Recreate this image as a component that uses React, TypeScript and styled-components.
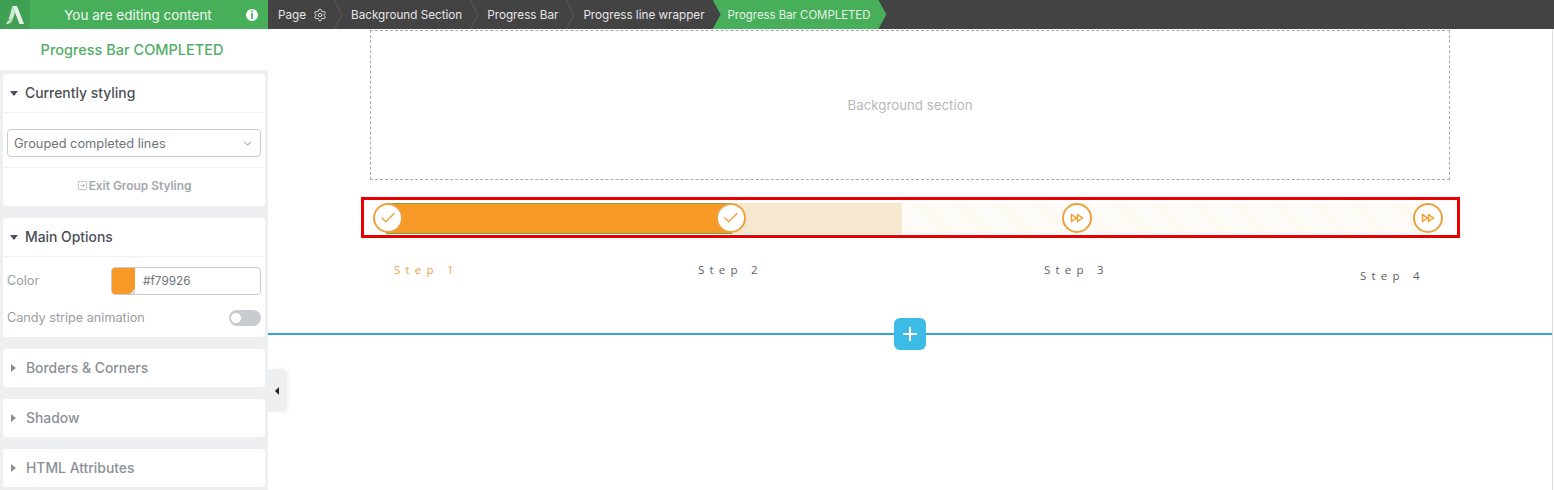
import React from 'react';
import styled, { createGlobalStyle } from 'styled-components';
import { Check, ChevronDown, Settings, SquareArrowRight } from 'lucide-react';

const GlobalStyle = createGlobalStyle`
  html, body {
    margin: 0;
    height: 490px;
    overflow: hidden;
    background: #fff;
    font-family: 'Inter', 'Roboto', sans-serif;
  }
  * { box-sizing: border-box; }
`;

const crumbs = ['Background Section', 'Progress Bar', 'Progress line wrapper'];

function Logo() {
  return (
    <svg width="22" height="22" viewBox="0 0 22 22">
      <path d="M8.500 2h4.500l7 18h-4.500z" fill="#e6f3e7" />
      <path d="M8.500 2l2.500 6.500-2 6-4.500 1z" fill="#cfe8d1" />
      <path d="M2 20.500c.5-3.500 3.500-5.500 7-6-.5 3.500-3 5.500-7 6z" fill="#bfe0c2" />
    </svg>
  );
}

function Forward() {
  return (
    <svg width="14" height="10" viewBox="0 0 14 10" fill="none" stroke="#f79926" strokeWidth="1.4">
      <path d="M1.500 1.500v7L6.500 5zM7.500 1.500v7L12.500 5z" />
    </svg>
  );
}

function App() {
  return (
    <Page>
      <GlobalStyle />
      <TopBar>
        <EditBar>
          <LogoBox>
            <Logo />
          </LogoBox>
          <EditText>You are editing content</EditText>
          <InfoDot>i</InfoDot>
        </EditBar>
        <Crumbs>
          <PageCrumb>
            Page
            <Settings size={14} strokeWidth={1.6} />
          </PageCrumb>
          {crumbs.map((c) => (
            <Crumb key={c}>{c}</Crumb>
          ))}
          <ActiveCrumb>Progress Bar COMPLETED</ActiveCrumb>
        </Crumbs>
      </TopBar>

      <Body>
        <Sidebar>
          <SideTitle>Progress Bar COMPLETED</SideTitle>
          <Panels>
            <Panel>
              <PanelHead>
                <Arrow $open />
                Currently styling
              </PanelHead>
              <SelectRow>
                <FakeSelect>
                  Grouped completed lines
                  <ChevronDown size={13} strokeWidth={1.5} />
                </FakeSelect>
              </SelectRow>
              <ExitRow>
                <SquareArrowRight size={11} strokeWidth={1.5} />
                Exit Group Styling
              </ExitRow>
            </Panel>
            <Panel>
              <PanelHead>
                <Arrow $open />
                Main Options
              </PanelHead>
              <OptionRow>
                <OptionLabel>Color</OptionLabel>
                <ColorInput>
                  <Swatch />
                  <ColorValue>#f79926</ColorValue>
                </ColorInput>
              </OptionRow>
              <OptionRow $tight>
                <OptionLabel>Candy stripe animation</OptionLabel>
                <Toggle />
              </OptionRow>
            </Panel>
            <ClosedPanel>
              <Arrow />
              Borders &amp; Corners
            </ClosedPanel>
            <ClosedPanel>
              <Arrow />
              Shadow
            </ClosedPanel>
            <ClosedPanel>
              <Arrow />
              HTML Attributes
            </ClosedPanel>
          </Panels>
          <CollapseTab />
        </Sidebar>

        <Canvas>
          <Wrapper>
            <BackgroundBox>Background section</BackgroundBox>
            <Highlight>
              <Track>
                <Stripes />
                <Buffer />
                <Fill />
                <Node $left={9}>
                  <Check size={18} strokeWidth={1.8} />
                </Node>
                <Node $left={352}>
                  <Check size={18} strokeWidth={1.8} />
                </Node>
                <Node $left={698}>
                  <Forward />
                </Node>
                <Node $left={1049}>
                  <Forward />
                </Node>
              </Track>
            </Highlight>
            <Steps>
              <Step $width={304} $active>Step 1</Step>
              <Step $width={346}>Step 2</Step>
              <Step $width={316}>Step 3</Step>
              <Step $width={80} $drop={6}>Step 4</Step>
            </Steps>
          </Wrapper>
          <Divider>
            <AddButton>
              <svg width="16" height="16" viewBox="0 0 16 16" stroke="#fff" strokeWidth="2">
                <path d="M8 1v14M1 8h14" />
              </svg>
            </AddButton>
          </Divider>
        </Canvas>
        <Scrollbar />
      </Body>
    </Page>
  );
}

const Page = styled.div`
  width: 1554px;
  height: 490px;
  display: flex;
  flex-direction: column;
  overflow: hidden;
`;

const TopBar = styled.div`
  height: 29px;
  display: flex;
  background: #434343;
  flex-shrink: 0;
`;

const EditBar = styled.div`
  width: 268px;
  display: flex;
  align-items: center;
  background: #47ae5a;
  color: #fff;
`;

const LogoBox = styled.div`
  width: 30px;
  height: 100%;
  display: flex;
  align-items: center;
  justify-content: center;
  background: #3f9f52;
`;

const EditText = styled.div`
  flex: 1;
  text-align: center;
  font-size: 13.5px;
  color: #f1f9f2;
`;

const InfoDot = styled.div`
  width: 12px;
  height: 12px;
  margin-right: 10px;
  border-radius: 50%;
  background: #fff;
  color: #47ae5a;
  font-size: 10px;
  font-weight: 800;
  line-height: 12px;
  text-align: center;
`;

const Crumbs = styled.div`
  display: flex;
  align-items: center;
  height: 100%;
  font-size: 11.7px;
  color: #e6e6e6;
`;

const Crumb = styled.div`
  position: relative;
  height: 100%;
  display: flex;
  align-items: center;
  padding: 0 12px 0 13px;
  white-space: nowrap;

  &:last-of-type {
    padding-right: 11px;
  }

  &::before {
    content: '';
    position: absolute;
    left: -4px;
    top: 0;
    width: 8px;
    height: 100%;
    background:
      linear-gradient(to top right, transparent calc(50% - 1px), #565656 50%, transparent calc(50% + 1px)) top / 100% 50% no-repeat,
      linear-gradient(to bottom right, transparent calc(50% - 1px), #565656 50%, transparent calc(50% + 1px)) bottom / 100% 50% no-repeat;
  }
`;

const PageCrumb = styled.div`
  display: flex;
  align-items: center;
  gap: 7px;
  height: 100%;
  padding: 0 11px 0 10px;
`;

const ActiveCrumb = styled.div`
  height: 100%;
  margin-left: -4px;
  display: flex;
  align-items: center;
  padding: 0 16px 0 15px;
  font-size: 11.4px;
  white-space: nowrap;
  background: #47ae5a;
  color: #e4f4e6;
  clip-path: polygon(0 0, calc(100% - 8px) 0, 100% 50%, calc(100% - 8px) 100%, 0 100%, 8px 50%);
`;

const Body = styled.div`
  flex: 1;
  display: flex;
  min-height: 0;
`;

const Sidebar = styled.div`
  position: relative;
  width: 268px;
  flex-shrink: 0;
  background: #eeeff0;
`;

const SideTitle = styled.div`
  height: 41px;
  display: flex;
  align-items: center;
  justify-content: center;
  padding-right: 4px;
  background: #fff;
  color: #52ad66;
  font-size: 14.5px;
  font-weight: 500;
`;

const Panels = styled.div`
  display: flex;
  flex-direction: column;
  gap: 12px;
  padding: 4px 3px 0;
`;

const Panel = styled.div`
  background: #fff;
  border-radius: 3px;
`;

const PanelHead = styled.div`
  height: 39px;
  display: flex;
  align-items: center;
  padding-left: 7px;
  border-bottom: 1px solid #f1f1f1;
  font-size: 13.9px;
  font-weight: 500;
  color: #4a4f57;
`;

const ClosedPanel = styled(Panel)`
  height: 38px;
  display: flex;
  align-items: center;
  padding-left: 8px;
  font-size: 13.9px;
  font-weight: 500;
  color: #8b9096;
`;

const Arrow = styled.span<{ $open?: boolean }>`
  width: 0;
  height: 0;
  margin-right: ${(p) => (p.$open ? '7px' : '10px')};
  border-style: solid;
  ${(p) =>
    p.$open
      ? `
    border-width: 5px 4.5px 0;
    border-color: #4a4f57 transparent transparent;
  `
      : `
    border-width: 4.5px 0 4.5px 5px;
    border-color: transparent transparent transparent #8b9096;
  `}
`;

const SelectRow = styled.div`
  padding: 16px 4px 10px;
  border-bottom: 1px solid #f1f1f1;
`;

const FakeSelect = styled.div`
  height: 28px;
  display: flex;
  align-items: center;
  justify-content: space-between;
  padding: 0 6px 0 6px;
  border: 1px solid #c9ccd0;
  border-radius: 4px;
  font-size: 12.8px;
  color: #6f747a;
`;

const ExitRow = styled.div`
  height: 38px;
  display: flex;
  align-items: center;
  justify-content: center;
  gap: 1px;
  padding-bottom: 4px;
  font-size: 11.9px;
  font-weight: 600;
  color: #a3a8ae;
`;

const OptionRow = styled.div<{ $tight?: boolean }>`
  height: ${(p) => (p.$tight ? '42px' : '38px')};
  display: flex;
  align-items: ${(p) => (p.$tight ? 'center' : 'flex-end')};
  justify-content: space-between;
  padding: ${(p) => (p.$tight ? '3px 4px 0' : '0 4px')};
`;

const OptionLabel = styled.div`
  line-height: 28px;
  font-size: 12.650px;
  color: #9a9ea4;
`;

const ColorInput = styled.div`
  width: 150px;
  height: 28px;
  display: flex;
  align-items: center;
  border: 1px solid #c9ccd0;
  border-radius: 4px;
  overflow: hidden;
`;

const Swatch = styled.div`
  width: 23px;
  height: 100%;
  background: linear-gradient(135deg, #f79926 88%, #d9d9d9 88%);
`;

const ColorValue = styled.div`
  padding-left: 8px;
  font-size: 11.8px;
  color: #6f747a;
`;

const Toggle = styled.div`
  position: relative;
  width: 32px;
  height: 16px;
  border-radius: 8px;
  background: #c8ccd1;

  &::after {
    content: '';
    position: absolute;
    left: 2px;
    top: 3px;
    width: 10px;
    height: 10px;
    border-radius: 50%;
    background: #fff;
  }
`;

const CollapseTab = styled.div`
  position: absolute;
  top: 340px;
  right: -19px;
  width: 19px;
  height: 43px;
  border-radius: 0 6px 6px 0;
  background: #eeeff0;
  box-shadow: 2px 0 4px rgba(0, 0, 0, 0.05);

  &::after {
    content: '';
    position: absolute;
    left: 7px;
    top: 18px;
    border-style: solid;
    border-width: 4px 4px 4px 0;
    border-color: transparent #222 transparent transparent;
  }
`;

const Canvas = styled.div`
  flex: 1;
  min-width: 0;
  display: flex;
  flex-direction: column;
`;

const Wrapper = styled.div`
  width: 1080px;
  height: 304px;
  margin: 0 auto;
  padding-top: 1px;
`;

const BackgroundBox = styled.div`
  height: 150px;
  display: flex;
  align-items: center;
  justify-content: center;
  border: 1px dashed #a9a9a9;
  font-size: 13.3px;
  color: #b9b9b9;
`;

const Highlight = styled.div`
  width: 1099px;
  height: 41px;
  margin: 17px 0 0 -9px;
  border: 3px solid #e60000;
`;

const Track = styled.div`
  position: relative;
  height: 35px;
`;

const Stripes = styled.div`
  position: absolute;
  left: 22px;
  right: 30px;
  top: 3px;
  bottom: 1px;
  background: repeating-linear-gradient(
    45deg,
    #fdf9f3 0 14px,
    #fefcf9 14px 28px
  );
`;

const Buffer = styled.div`
  position: absolute;
  left: 22px;
  width: 516px;
  top: 3px;
  bottom: 1px;
  background: #f6e7d1;
`;

const Fill = styled.div`
  position: absolute;
  left: 22px;
  width: 346px;
  top: 3px;
  bottom: 1px;
  background: #f79926;
  border-top: 1px solid #7fa344;
  border-bottom: 1px solid #7fa344;
`;

const Node = styled.div<{ $left: number }>`
  position: absolute;
  top: 3px;
  left: ${(p) => p.$left}px;
  width: 30px;
  height: 30px;
  display: flex;
  align-items: center;
  justify-content: center;
  border: 2px solid #eba23f;
  border-radius: 50%;
  background: #fff;
  color: #eba23f;
`;

const Steps = styled.div`
  display: flex;
  padding: 24px 0 0 24px;
`;

const Step = styled.div<{ $width: number; $active?: boolean; $drop?: number }>`
  width: ${(p) => p.$width}px;
  margin-top: ${(p) => p.$drop ?? 0}px;
  font-family: 'Open Sans', sans-serif;
  font-size: 11.5px;
  letter-spacing: 5.2px;
  white-space: nowrap;
  color: ${(p) => (p.$active ? '#f0a14a' : '#5c5f65')};
`;

const Divider = styled.div`
  height: 2px;
  display: flex;
  align-items: center;
  justify-content: center;
  background: #2fa6d4;
`;

const AddButton = styled.div`
  width: 32px;
  height: 32px;
  flex-shrink: 0;
  display: flex;
  align-items: center;
  justify-content: center;
  border-radius: 6px;
  background: #3bbbe6;
`;

const Scrollbar = styled.div`
  width: 2px;
  flex-shrink: 0;
  border-left: 1px solid #dedede;
`;

export default App;
